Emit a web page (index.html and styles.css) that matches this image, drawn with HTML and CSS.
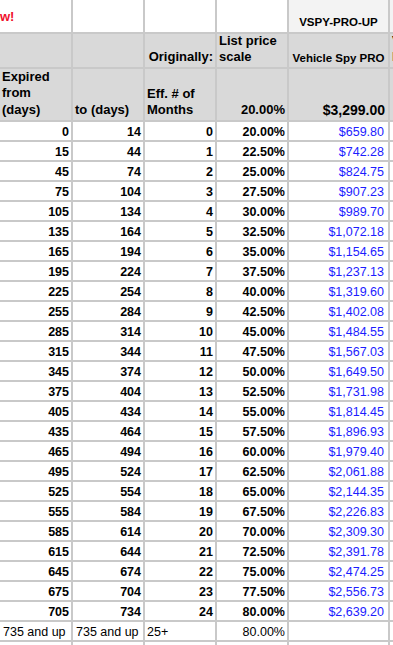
FILE: index.html
```html
<!DOCTYPE html>
<html>
<head>
<meta charset="utf-8">
<link rel="stylesheet" href="styles.css">
</head>
<body>
<div class="sheet">
  <div class="c top-a"><span class="new">w!</span></div>
  <div class="c"></div>
  <div class="c"></div>
  <div class="c"></div>
  <div class="c light ctr small b">VSPY-PRO-UP</div>
  <div class="c light"></div>

  <div class="c h"></div>
  <div class="c h"></div>
  <div class="c h r">Originally:</div>
  <div class="c h">List price<br>scale</div>
  <div class="c h ctr small">Vehicle Spy PRO</div>
  <div class="c h"><span class="clip">Vehicle<br>Pro</span></div>

  <div class="c h tall">Expired<br>from<br>(days)</div>
  <div class="c h">to (days)</div>
  <div class="c h">Eff. # of<br>Months</div>
  <div class="c h r">20.00%</div>
  <div class="c h r big">$3,299.00</div>
  <div class="c h"></div>

  <div class="c r b">0</div><div class="c r b">14</div><div class="c r b">0</div><div class="c r b">20.00%</div><div class="c r money">$659.80</div><div class="c"></div>
  <div class="c r b">15</div><div class="c r b">44</div><div class="c r b">1</div><div class="c r b">22.50%</div><div class="c r money">$742.28</div><div class="c"></div>
  <div class="c r b">45</div><div class="c r b">74</div><div class="c r b">2</div><div class="c r b">25.00%</div><div class="c r money">$824.75</div><div class="c"></div>
  <div class="c r b">75</div><div class="c r b">104</div><div class="c r b">3</div><div class="c r b">27.50%</div><div class="c r money">$907.23</div><div class="c"></div>
  <div class="c r b">105</div><div class="c r b">134</div><div class="c r b">4</div><div class="c r b">30.00%</div><div class="c r money">$989.70</div><div class="c"></div>
  <div class="c r b">135</div><div class="c r b">164</div><div class="c r b">5</div><div class="c r b">32.50%</div><div class="c r money">$1,072.18</div><div class="c"></div>
  <div class="c r b">165</div><div class="c r b">194</div><div class="c r b">6</div><div class="c r b">35.00%</div><div class="c r money">$1,154.65</div><div class="c"></div>
  <div class="c r b">195</div><div class="c r b">224</div><div class="c r b">7</div><div class="c r b">37.50%</div><div class="c r money">$1,237.13</div><div class="c"></div>
  <div class="c r b">225</div><div class="c r b">254</div><div class="c r b">8</div><div class="c r b">40.00%</div><div class="c r money">$1,319.60</div><div class="c"></div>
  <div class="c r b">255</div><div class="c r b">284</div><div class="c r b">9</div><div class="c r b">42.50%</div><div class="c r money">$1,402.08</div><div class="c"></div>
  <div class="c r b">285</div><div class="c r b">314</div><div class="c r b">10</div><div class="c r b">45.00%</div><div class="c r money">$1,484.55</div><div class="c"></div>
  <div class="c r b">315</div><div class="c r b">344</div><div class="c r b">11</div><div class="c r b">47.50%</div><div class="c r money">$1,567.03</div><div class="c"></div>
  <div class="c r b">345</div><div class="c r b">374</div><div class="c r b">12</div><div class="c r b">50.00%</div><div class="c r money">$1,649.50</div><div class="c"></div>
  <div class="c r b">375</div><div class="c r b">404</div><div class="c r b">13</div><div class="c r b">52.50%</div><div class="c r money">$1,731.98</div><div class="c"></div>
  <div class="c r b">405</div><div class="c r b">434</div><div class="c r b">14</div><div class="c r b">55.00%</div><div class="c r money">$1,814.45</div><div class="c"></div>
  <div class="c r b">435</div><div class="c r b">464</div><div class="c r b">15</div><div class="c r b">57.50%</div><div class="c r money">$1,896.93</div><div class="c"></div>
  <div class="c r b">465</div><div class="c r b">494</div><div class="c r b">16</div><div class="c r b">60.00%</div><div class="c r money">$1,979.40</div><div class="c"></div>
  <div class="c r b">495</div><div class="c r b">524</div><div class="c r b">17</div><div class="c r b">62.50%</div><div class="c r money">$2,061.88</div><div class="c"></div>
  <div class="c r b">525</div><div class="c r b">554</div><div class="c r b">18</div><div class="c r b">65.00%</div><div class="c r money">$2,144.35</div><div class="c"></div>
  <div class="c r b">555</div><div class="c r b">584</div><div class="c r b">19</div><div class="c r b">67.50%</div><div class="c r money">$2,226.83</div><div class="c"></div>
  <div class="c r b">585</div><div class="c r b">614</div><div class="c r b">20</div><div class="c r b">70.00%</div><div class="c r money">$2,309.30</div><div class="c"></div>
  <div class="c r b">615</div><div class="c r b">644</div><div class="c r b">21</div><div class="c r b">72.50%</div><div class="c r money">$2,391.78</div><div class="c"></div>
  <div class="c r b">645</div><div class="c r b">674</div><div class="c r b">22</div><div class="c r b">75.00%</div><div class="c r money">$2,474.25</div><div class="c"></div>
  <div class="c r b">675</div><div class="c r b">704</div><div class="c r b">23</div><div class="c r b">77.50%</div><div class="c r money">$2,556.73</div><div class="c"></div>
  <div class="c r b">705</div><div class="c r b">734</div><div class="c r b">24</div><div class="c r b">80.00%</div><div class="c r money">$2,639.20</div><div class="c"></div>
  <div class="c lp">735 and up</div><div class="c lp">735 and up</div><div class="c">25+</div><div class="c r">80.00%</div><div class="c"></div><div class="c"></div>

  <div class="c"></div><div class="c"></div><div class="c"></div><div class="c"></div><div class="c"></div><div class="c"></div>
</div>
</body>
</html>
```

FILE: styles.css
```css
html, body {
  margin: 0;
  padding: 0;
  background: #ffffff;
  overflow: hidden;
}

body {
  font-family: "Liberation Sans", Arial, sans-serif;
  color: #000;
}

.sheet {
  display: grid;
  grid-template-columns: 71px 70px 70px 70px 99px 1fr;
  grid-template-rows: 32px 33px 51px repeat(27, 18px);
  gap: 2px;
  background: #c9c9c9;
  width: 393px;
  height: 645px;
  overflow: hidden;
}

.c {
  background: #ffffff;
  display: flex;
  flex-direction: column;
  justify-content: flex-end;
  padding: 0 2px 0 2px;
  font-size: 12.5px;
  line-height: 15px;
  white-space: nowrap;
  overflow: hidden;
  min-width: 0;
}

.r { text-align: right; }
.b { font-weight: bold; }
.ctr { text-align: center; }
.lp { padding-left: 3px; }

.top-a {
  justify-content: center;
  padding-left: 0;
}

.new {
  color: #f0102c;
  font-weight: bold;
  font-size: 13px;
  line-height: 16px;
  padding-top: 2px;
}

.light {
  background: #f3f3f3;
}

.small {
  font-size: 11.5px;
  line-height: 14px;
  padding-bottom: 3px;
}

.h {
  background: #d9d9d9;
  font-weight: bold;
  font-size: 13px;
  line-height: 16px;
  padding-bottom: 2px;
}

.h.small {
  font-size: 11.5px;
  line-height: 14px;
  padding-bottom: 2px;
}

.tall {
  line-height: 16.5px;
}

.big {
  font-size: 14px;
  padding-right: 3px;
}

.money {
  color: #1c1cff;
  padding-right: 4px;
}

.clip {
  display: block;
  width: 80px;
  text-align: left;
}
```
